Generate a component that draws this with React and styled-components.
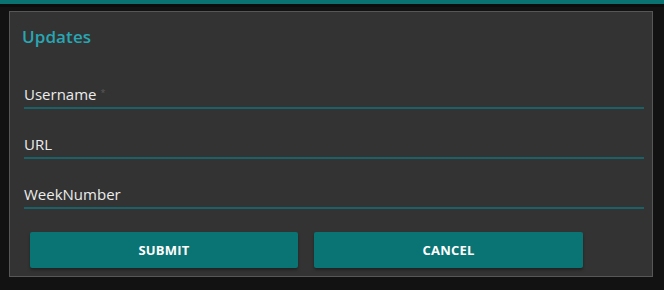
import React from "react";
import styled, { createGlobalStyle } from "styled-components";

const Global = createGlobalStyle`
  html, body { margin: 0; padding: 0; background: #121212; }
  body { font-family: "Open Sans", "Noto Sans", sans-serif; }
`;

const Page = styled.div`
  width: 664px;
  height: 290px;
  background: #121212;
  display: flex;
  flex-direction: column;
`;

const TopBar = styled.div`
  height: 4px;
  background: #0b7272;
  flex: none;
`;

const Shade = styled.div`
  height: 3px;
  background: #0c0c0c;
  flex: none;
`;

const Body = styled.div`
  padding: 4px 0 0 9px;
`;

const Panel = styled.section`
  box-sizing: border-box;
  width: 644px;
  height: 266px;
  background: #333333;
  border: 1px solid #575757;
  display: flex;
  flex-direction: column;
`;

const Title = styled.h2`
  margin: 0;
  padding: 13px 0 0 12px;
  height: 46px;
  box-sizing: border-box;
  font-size: 17px;
  font-weight: 600;
  color: #28a6b3;
  line-height: 24px;
  letter-spacing: 0.1px;
`;

const Form = styled.form`
  display: flex;
  flex-direction: column;
  padding: 0 8px 0 14px;
  margin: 0;
`;

const Field = styled.label`
  display: flex;
  align-items: flex-end;
  height: 51px;
  margin-bottom: -1px;
  box-sizing: border-box;
  border-bottom: 2px solid #1a6168;
  padding-bottom: 3px;
  font-size: 15px;
  color: #ececec;
  line-height: 20px;
`;

const Required = styled.span`
  font-size: 9px;
  color: #5a5a5a;
  align-self: flex-start;
  margin: 25px 0 0 4px;
`;

const Actions = styled.div`
  display: flex;
  gap: 16px;
  padding: 24px 0 0 6px;
`;

const Button = styled.button`
  width: ${(p) => p.$w}px;
  height: 36px;
  border: none;
  border-radius: 2px;
  background: #0a7373;
  color: #ffffff;
  font-family: "Open Sans", "Noto Sans", sans-serif;
  font-weight: 700;
  font-size: 13px;
  letter-spacing: 0.2px;
  box-shadow: 0 2px 3px rgba(0, 0, 0, 0.35);
  cursor: pointer;
`;

export default function App() {
  return (
    <>
      <Global />
      <Page>
        <TopBar />
        <Shade />
        <Body>
          <Panel>
            <Title>Updates</Title>
            <Form>
              <Field>
                Username<Required>*</Required>
              </Field>
              <Field>URL</Field>
              <Field>WeekNumber</Field>
              <Actions>
                <Button type="button" $w={268}>SUBMIT</Button>
                <Button type="button" $w={269}>CANCEL</Button>
              </Actions>
            </Form>
          </Panel>
        </Body>
      </Page>
    </>
  );
}
